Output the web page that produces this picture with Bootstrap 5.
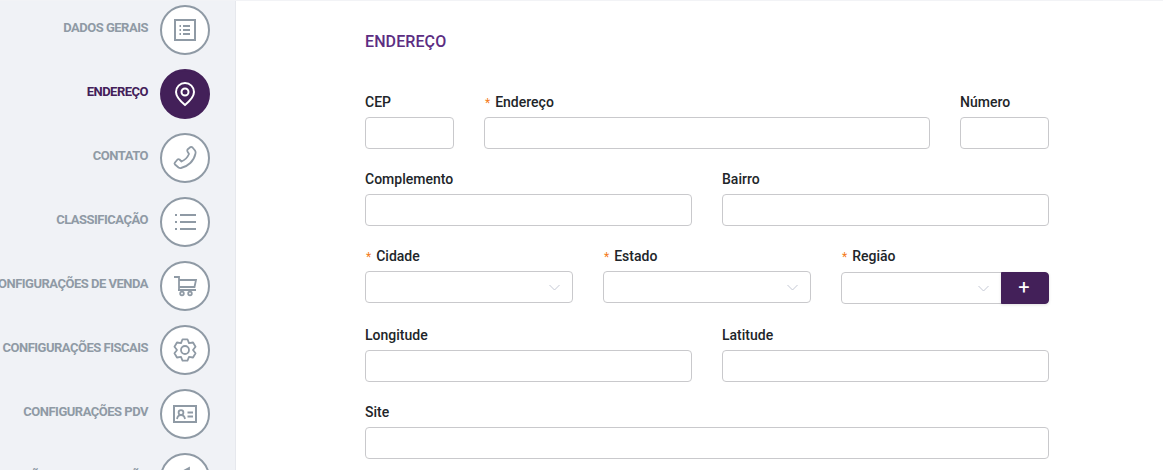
<!DOCTYPE html>
<html lang="pt-BR">
<head>
    <meta charset="UTF-8">
    <meta name="viewport" content="width=device-width, initial-scale=1.0">
    <title>Endereço</title>
    <link href="https://cdn.jsdelivr.net/npm/bootstrap@5.3.0/dist/css/bootstrap.min.css" rel="stylesheet">
    <style>
        html, body {
            height: 100%;
            overflow: hidden;
        }

        body {
            font-family: Roboto, "Liberation Sans", sans-serif;
            font-size: 14px;
            color: #212529;
            background-color: #fff;
        }

        .app-shell {
            height: 470px;
            border-top: 1px solid #f2f3f6;
        }

        .side-steps {
            width: 236px;
            flex-shrink: 0;
            background-color: #f0f2f6;
            border-right: 1px solid #e6e8ed;
            padding: 4px 25px 0 0;
            gap: 14px;
            overflow: hidden;
        }

        .step-item {
            gap: 12px;
            color: #8f9aa5;
            white-space: nowrap;
            text-decoration: none;
            flex-shrink: 0;
        }

        .step-item:hover {
            color: #8f9aa5;
        }

        .step-label {
            font-size: 13px;
            font-weight: 700;
            letter-spacing: -0.5px;
            margin-top: -4px;
        }

        .step-circle {
            width: 50px;
            height: 50px;
            flex-shrink: 0;
            border: 2px solid #8f9aa5;
            border-radius: 50%;
            background-color: #fff;
        }

        .step-circle svg {
            width: 26px;
            height: 26px;
            fill: none;
            stroke: #8f9aa5;
            stroke-width: 1.8;
        }

        .step-item.step-active {
            color: #432059;
        }

        .step-active .step-circle {
            background-color: #432059;
            border-color: #432059;
        }

        .step-active .step-circle svg {
            stroke: #fff;
            stroke-width: 2;
        }

        .form-wrap {
            width: 684px;
            margin-left: 129px;
            padding-top: 29px;
        }

        .form-heading {
            font-size: 16px;
            font-weight: 500;
            line-height: 24px;
            letter-spacing: 0.1px;
            color: #5c2d82;
            margin-bottom: 38px;
        }

        .form-grid {
            --bs-gutter-x: 30px;
        }

        .field-box {
            margin-bottom: 20px;
        }

        .field-label {
            font-weight: 500;
            font-size: 14px;
            line-height: 21px;
            margin-bottom: 4px;
            display: block;
        }

        .req-mark {
            color: #f47b20;
            font-size: 12px;
            line-height: 1;
            margin-left: 1px;
            margin-right: 5px;
            font-weight: 400;
        }

        .form-wrap .form-control,
        .form-wrap .form-select {
            height: 32px;
            border-color: #c9c9cc;
            border-radius: 4px;
            padding-top: 0;
            padding-bottom: 0;
        }

        .form-wrap .form-select {
            background-image: url("data:image/svg+xml,%3csvg xmlns='http://www.w3.org/2000/svg' viewBox='0 0 11 7'%3e%3cpath fill='none' stroke='%23c4c8d4' d='M.5 1l5 5 5-5'/%3e%3c/svg%3e");
            background-size: 11px 7px;
            background-position: right 12px center;
        }

        .region-group {
            margin: 5px 0 1px;
        }

        .btn-add {
            width: 48px;
            height: 32px;
            padding: 0 2px 2px 0;
            background-color: #432059;
            border-color: #432059;
            color: #fff;
            font-size: 20px;
            font-weight: 400;
            line-height: 1;
            border-radius: 0 4px 4px 0;
            box-shadow: 0 1px 3px rgba(0, 0, 0, 0.12);
        }

        .btn-add:hover {
            background-color: #361a48;
            border-color: #361a48;
        }
    </style>
</head>
<body>
    <div class="app-shell d-flex">
        <!-- etapas do cadastro -->
        <nav class="side-steps d-flex flex-column align-items-end">
            <a class="step-item d-flex align-items-center" href="#">
                <span class="step-label">DADOS GERAIS</span>
                <span class="step-circle d-flex align-items-center justify-content-center">
                    <svg viewBox="0 0 26 26"><rect x="3" y="3" width="20" height="20" stroke-width="2"/><path d="M11 9h7M11 13h7M11 17h7M7.5 9h1.5M7.5 13h1.5M7.5 17h1.5"/></svg>
                </span>
            </a>
            <a class="step-item step-active d-flex align-items-center" href="#">
                <span class="step-label">ENDEREÇO</span>
                <span class="step-circle d-flex align-items-center justify-content-center">
                    <svg viewBox="0 0 26 26"><path d="M13 24C13 24 4 16.5 4 11A9 9 0 0 1 22 11C22 16.5 13 24 13 24Z"/><circle cx="13" cy="11" r="3.5"/></svg>
                </span>
            </a>
            <a class="step-item d-flex align-items-center" href="#">
                <span class="step-label">CONTATO</span>
                <span class="step-circle d-flex align-items-center justify-content-center">
                    <svg viewBox="0 0 26 26"><path stroke-linejoin="round" d="M15.5 4.5L18.5 2Q19.5 1.5 20.5 2.5L23 5.5Q24 7 23.5 8.5C22 16 16 21.5 9 23Q7.5 23.2 6.5 22.5L3 19.5Q2 18.5 3 17.5L5.5 14.5Q6.5 13.8 7.5 14.5L9.5 16.5C13 15 15.5 12.5 17 9L15.5 6.5Q15 5.5 15.5 4.5Z"/></svg>
                </span>
            </a>
            <a class="step-item d-flex align-items-center" href="#">
                <span class="step-label">CLASSIFICAÇÃO</span>
                <span class="step-circle d-flex align-items-center justify-content-center">
                    <svg viewBox="0 0 26 26"><path d="M8 6h16M8 13h16M8 20h16M3 6h2M3 13h2M3 20h2"/></svg>
                </span>
            </a>
            <a class="step-item d-flex align-items-center" href="#">
                <span class="step-label">CONFIGURAÇÕES DE VENDA</span>
                <span class="step-circle d-flex align-items-center justify-content-center">
                    <svg viewBox="0 0 26 26"><path d="M2 4H7V17M6 17H24M7 7H24L22.5 14H7"/><circle cx="10" cy="20.5" r="1.8"/><circle cx="18" cy="20.5" r="1.8"/></svg>
                </span>
            </a>
            <a class="step-item d-flex align-items-center" href="#">
                <span class="step-label">CONFIGURAÇÕES FISCAIS</span>
                <span class="step-circle d-flex align-items-center justify-content-center">
                    <svg viewBox="0 0 26 26"><path stroke-linejoin="round" d="M10.53 2.28H15.47L17 6.07 21.04 5.5 23.52 9.78 21 13 23.52 16.22 21.04 20.5 17 19.93 15.47 23.72H10.53L9 19.93 4.96 20.5 2.48 16.22 5 13 2.48 9.78 4.96 5.5 9 6.07Z"/><circle cx="13" cy="13" r="4"/></svg>
                </span>
            </a>
            <a class="step-item d-flex align-items-center" href="#">
                <span class="step-label">CONFIGURAÇÕES PDV</span>
                <span class="step-circle d-flex align-items-center justify-content-center">
                    <svg viewBox="0 0 26 26"><rect x="2" y="5" width="22" height="16" stroke-width="2"/><circle cx="9" cy="11.5" r="2.4"/><path d="M5 18c.5-3 2-4 4-4s3.5 1 4 4M15.5 11.5H21M15.5 15.5H21"/></svg>
                </span>
            </a>
            <a class="step-item d-flex align-items-center" href="#">
                <span class="step-label">INTEGRAÇÃO E COMUNICAÇÃO</span>
                <span class="step-circle d-flex align-items-center justify-content-center">
                    <svg viewBox="0 0 26 26"><path d="M17 3L6 9v6l11 6ZM6 9H3v6h3"/></svg>
                </span>
            </a>
        </nav>

        <main class="flex-grow-1">
            <div class="form-wrap">
                <h2 class="form-heading">ENDEREÇO</h2>
                <form class="row form-grid">
                    <div class="col-2 field-box">
                        <label class="field-label" for="cep">CEP</label>
                        <input class="form-control" id="cep" type="text">
                    </div>
                    <div class="col-8 field-box">
                        <label class="field-label" for="endereco"><span class="req-mark">*</span>Endereço</label>
                        <input class="form-control" id="endereco" type="text">
                    </div>
                    <div class="col-2 field-box">
                        <label class="field-label" for="numero">Número</label>
                        <input class="form-control" id="numero" type="text">
                    </div>

                    <div class="col-6 field-box">
                        <label class="field-label" for="complemento">Complemento</label>
                        <input class="form-control" id="complemento" type="text">
                    </div>
                    <div class="col-6 field-box">
                        <label class="field-label" for="bairro">Bairro</label>
                        <input class="form-control" id="bairro" type="text">
                    </div>

                    <div class="col-4 field-box">
                        <label class="field-label" for="cidade"><span class="req-mark">*</span>Cidade</label>
                        <select class="form-select" id="cidade"><option></option></select>
                    </div>
                    <div class="col-4 field-box">
                        <label class="field-label" for="estado"><span class="req-mark">*</span>Estado</label>
                        <select class="form-select" id="estado"><option></option></select>
                    </div>
                    <div class="col-4 field-box">
                        <label class="field-label" for="regiao"><span class="req-mark">*</span>Região</label>
                        <div class="input-group flex-nowrap region-group">
                            <select class="form-select" id="regiao"><option></option></select>
                            <button class="btn btn-add" type="button">+</button>
                        </div>
                    </div>

                    <div class="col-6 field-box">
                        <label class="field-label" for="longitude">Longitude</label>
                        <input class="form-control" id="longitude" type="text">
                    </div>
                    <div class="col-6 field-box">
                        <label class="field-label" for="latitude">Latitude</label>
                        <input class="form-control" id="latitude" type="text">
                    </div>

                    <div class="col-12 field-box">
                        <label class="field-label" for="site">Site</label>
                        <input class="form-control" id="site" type="text">
                    </div>
                </form>
            </div>
        </main>
    </div>

    <script src="https://cdn.jsdelivr.net/npm/bootstrap@5.3.0/dist/js/bootstrap.bundle.min.js"></script>
</body>
</html>
